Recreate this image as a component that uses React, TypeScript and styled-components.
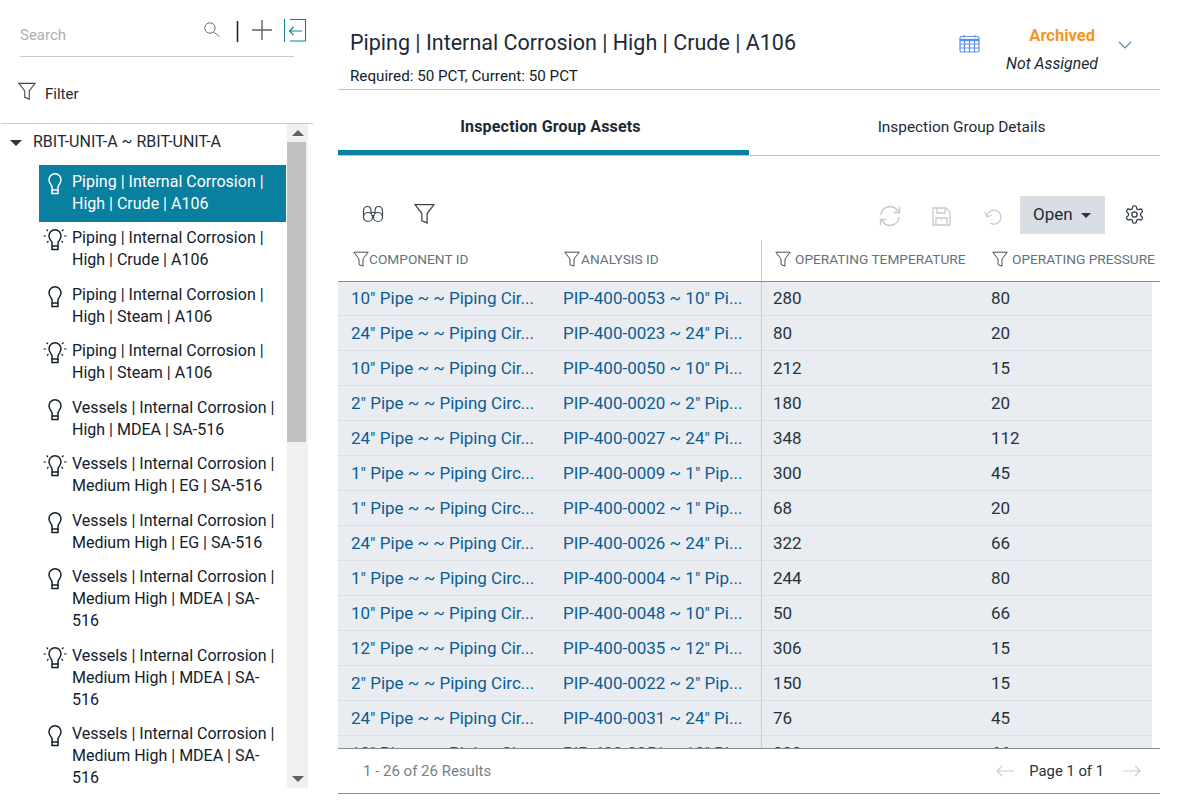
import React from "react";
import styled, { createGlobalStyle } from "styled-components";

const GlobalStyle = createGlobalStyle`
  html, body {
    margin: 0;
    padding: 0;
    background: #fff;
  }
  body {
    font-family: Roboto, "Noto Sans", sans-serif;
    color: #1c2a36;
  }
`;

const Page = styled.div`
  display: flex;
  width: 1184px;
  height: 800px;
  overflow: hidden;
`;

/* left panel */
const Side = styled.aside`
  width: 338px;
  flex: none;
  display: flex;
  flex-direction: column;
`;

const SearchRow = styled.div`
  display: flex;
  align-items: center;
  height: 56px;
  margin: 0 44px 0 20px;
  border-bottom: 1px solid #c6ccd2;
  box-sizing: content-box;
`;

const SearchText = styled.span`
  font-size: 15px;
  color: #a9afb5;
  flex: 1;
  padding-top: 14px;
`;

const SearchTools = styled.div`
  display: flex;
  align-items: center;
  margin-right: -13px;
  margin-top: 6px;
`;

const FilterRow = styled.div`
  display: flex;
  align-items: center;
  gap: 9px;
  height: 66px;
  margin-left: 18px;
  font-size: 15px;
  padding-top: 7px;
  box-sizing: border-box;
  svg {
    margin-bottom: 6px;
  }
`;

const TreeBox = styled.div`
  width: 312px;
  margin-left: 1px;
  height: 665px;
  border-top: 1px solid #c6ccd2;
  display: flex;
  overflow: hidden;
`;

const Tree = styled.div`
  width: 285px;
  flex: none;
  overflow: hidden;
`;

const TreeHead = styled.div`
  display: flex;
  align-items: center;
  height: 41px;
  padding: 0 0 6px 9px;
  box-sizing: border-box;
  font-size: 16px;
  gap: 11px;
`;

const Caret = styled.span`
  width: 0;
  height: 0;
  border-left: 6px solid transparent;
  border-right: 6px solid transparent;
  border-top: 6px solid #333;
  margin-top: 3px;
`;

const TreeList = styled.div`
  margin-left: 38px;
`;

const Item = styled.div<{ $active?: boolean }>`
  display: flex;
  box-sizing: border-box;
  padding: 5.5px 4px 7px 0;
  line-height: 22px;
  font-size: 16px;
  background: ${(p) => (p.$active ? "#09809f" : "transparent")};
  color: ${(p) => (p.$active ? "#fff" : "#13202b")};
`;

const ItemIcon = styled.span`
  width: 32px;
  margin-right: 1px;
  flex: none;
  display: flex;
  justify-content: center;
`;

const ScrollTrack = styled.div`
  width: 21px;
  margin-left: 1px;
  height: 664px;
  background: #f0f0f0;
  display: flex;
  flex-direction: column;
  align-items: center;
`;

const ScrollBtn = styled.div<{ $down?: boolean }>`
  height: 18px;
  width: 100%;
  display: flex;
  align-items: center;
  justify-content: center;
  &::before {
    content: "";
    border-left: 6px solid transparent;
    border-right: 6px solid transparent;
    ${(p) => (p.$down ? "border-top: 6px solid #606060;" : "border-bottom: 6px solid #606060;")}
  }
`;

const ScrollThumb = styled.div`
  width: 19px;
  margin-right: 2px;
  height: 300px;
  background: #c1c1c1;
`;

const ScrollGap = styled.div`
  flex: 1;
`;

/* main panel */
const Main = styled.main`
  width: 822px;
  flex: none;
  display: flex;
  flex-direction: column;
`;

const Header = styled.header`
  height: 89px;
  border-bottom: 1px solid #c4c4c4;
  display: flex;
  box-sizing: content-box;
`;

const TitleBlock = styled.div`
  flex: 1;
  padding: 27px 0 0 12px;
`;

const Title = styled.div`
  font-size: 21.5px;
  line-height: 32px;
  color: #1d2a35;
`;

const Sub = styled.div`
  font-size: 15.2px;
  line-height: 20px;
  margin-top: 7px;
  color: #13202b;
`;

const StatusBlock = styled.div`
  display: flex;
  align-items: flex-start;
`;

const CalIcon = styled.span`
  margin-top: 34px;
  margin-right: 26px;
`;

const StatusText = styled.div`
  text-align: right;
  padding-top: 25px;
  width: 92px;
  white-space: nowrap;
`;

const Archived = styled.div`
  font-size: 16.500px;
  font-weight: 700;
  line-height: 22px;
  color: #f7941d;
  padding-right: 3px;
`;

const NotAssigned = styled.div`
  font-size: 15.800px;
  font-style: italic;
  line-height: 22px;
  margin-top: 6px;
  padding-right: 1px;
`;

const Chevron = styled.span`
  margin: 34px 28px 0 20px;
`;

const Tabs = styled.div`
  display: flex;
  height: 65px;
  border-bottom: 1px solid #c4c4c4;
`;

const Tab = styled.div<{ $active?: boolean }>`
  width: 411px;
  display: flex;
  justify-content: center;
  padding: 26px 0 0 14px;
  box-sizing: border-box;
  font-size: ${(p) => (p.$active ? "16px" : "15.400px")};
  letter-spacing: ${(p) => (p.$active ? "0.180px" : "0")};
  line-height: 22px;
  font-weight: ${(p) => (p.$active ? 700 : 400)};
  border-bottom: 5px solid ${(p) => (p.$active ? "#09809f" : "transparent")};
  height: 65px;
`;

const Toolbar = styled.div`
  height: 84px;
  display: flex;
  align-items: flex-end;
  padding-bottom: 6px;
  box-sizing: border-box;
`;

const ToolLeft = styled.div`
  display: flex;
  align-items: center;
  gap: 30px;
  padding: 0 0 3px 24px;
  box-sizing: border-box;
  height: 38px;
  flex: 1;
`;

const ToolRight = styled.div`
  display: flex;
  align-items: center;
  height: 38px;
`;

const GhostIcon = styled.span<{ $w: number }>`
  width: ${(p) => p.$w}px;
  display: flex;
  justify-content: center;
  padding-top: 2px;
`;

const OpenBtn = styled.div`
  display: flex;
  align-items: center;
  gap: 8px;
  width: 85px;
  height: 38px;
  box-sizing: border-box;
  padding: 0 0 2px 13px;
  background: #d8dee4;
  font-size: 17px;
  &::after {
    content: "";
    border-left: 5px solid transparent;
    border-right: 5px solid transparent;
    border-top: 5px solid #333;
    margin-top: 2px;
  }
`;

const GearWrap = styled.span`
  margin: 0 15px 2px 19px;
  display: flex;
`;

const Grid = styled.div`
  height: 508px;
  overflow: hidden;
  border-bottom: 1px solid #7d8c96;
`;

const COLS = "213px 210px 1px 218px 172px";

const HeadRow = styled.div`
  display: grid;
  grid-template-columns: ${COLS} 8px;
  height: 42px;
  box-sizing: border-box;
  border-bottom: 1px solid #7d8c96;
`;

const HeadCell = styled.div<{ $gap: number; $pad: number }>`
  display: flex;
  align-items: center;
  padding: 0 0 4px ${(p) => p.$pad}px;
  gap: ${(p) => p.$gap}px;
  font-size: 13.700px;
  color: #64727e;
  white-space: nowrap;
  svg {
    flex: none;
  }
`;

const Divider = styled.div`
  background: #c6ced4;
`;

const Cell = styled.div<{ $link?: boolean; $pad: number }>`
  display: flex;
  align-items: center;
  padding-left: ${(p) => p.$pad}px;
  font-size: 17px;
  white-space: nowrap;
  overflow: hidden;
  color: ${(p) => (p.$link ? "#0b5c94" : "#26333e")};
`;

const Row = styled.div`
  display: grid;
  grid-template-columns: ${COLS};
  width: 814px;
  height: 35px;
  box-sizing: border-box;
  background: #e9edf1;
  border-bottom: 1px solid #d8dfe4;
  ${HeadRow} + & {
    height: 34px;
    ${Cell} {
      padding-bottom: 1px;
    }
  }
`;

const Footer = styled.div`
  height: 44px;
  display: flex;
  align-items: center;
  justify-content: space-between;
  padding: 0 19px 0 25px;
  border-bottom: 1px solid #7d8c96;
  font-size: 15px;
`;

const Results = styled.span`
  color: #747f88;
`;

const Pager = styled.div`
  display: flex;
  align-items: center;
  color: #26333e;
`;

const PageLabel = styled.span`
  margin: 0 19px 0 15px;
  font-size: 14.800px;
`;

const Funnel = ({ size = 16, stroke = "#3b4650" }: { size?: number; stroke?: string }) => (
  <svg width={size} height={size} viewBox="0 0 20 20" fill="none" stroke={stroke} strokeWidth="1.2">
    <path d="M1 1.500h18l-6.500 8.500v9l-5-2v-7z" strokeLinejoin="miter" />
  </svg>
);

const Bulb = ({ rays, color = "#13202b" }: { rays?: boolean; color?: string }) => (
  <svg width="26" height="26" viewBox="0 0 26 26" fill="none" stroke={color} strokeWidth="1.5">
    <path d="M10 19v-3.200c0-1.600-3-3-3-7a6 6 0 0 1 12 0c0 4-3 5.400-3 7V19z" strokeLinejoin="round" />
    <path d="M10 19v3.500h6V19" />
    {rays && (
      <path
        d="M1.500 9h2.500M22 9h2.500M4.500 2.500l1.500 1.500M21.500 2.500L20 4M5 15.500l1.500-1.500M21 15.500L19.500 14"
        strokeWidth="1.200"
      />
    )}
  </svg>
);

const Calendar = () => (
  <svg width="21" height="19" viewBox="0 0 21 19" fill="none" stroke="#5f8fe8" strokeWidth="1.2">
    <rect x="1" y="2.500" width="19" height="15.500" rx="1.500" />
    <path d="M1 6h19" strokeWidth="2.400" />
    <path d="M5 1v2.500M16 1v2.500M5.500 6v12M10.500 6v12M15.500 6v12M1 10h19M1 14h19" />
  </svg>
);

const rows = [
  ['10" Pipe ~ ~ Piping Cir...', 'PIP-400-0053 ~ 10" Pi...', "280", "80"],
  ['24" Pipe ~ ~ Piping Cir...', 'PIP-400-0023 ~ 24" Pi...', "80", "20"],
  ['10" Pipe ~ ~ Piping Cir...', 'PIP-400-0050 ~ 10" Pi...', "212", "15"],
  ['2" Pipe ~ ~ Piping Circ...', 'PIP-400-0020 ~ 2" Pip...', "180", "20"],
  ['24" Pipe ~ ~ Piping Cir...', 'PIP-400-0027 ~ 24" Pi...', "348", "112"],
  ['1" Pipe ~ ~ Piping Circ...', 'PIP-400-0009 ~ 1" Pip...', "300", "45"],
  ['1" Pipe ~ ~ Piping Circ...', 'PIP-400-0002 ~ 1" Pip...', "68", "20"],
  ['24" Pipe ~ ~ Piping Cir...', 'PIP-400-0026 ~ 24" Pi...', "322", "66"],
  ['1" Pipe ~ ~ Piping Circ...', 'PIP-400-0004 ~ 1" Pip...', "244", "80"],
  ['10" Pipe ~ ~ Piping Cir...', 'PIP-400-0048 ~ 10" Pi...', "50", "66"],
  ['12" Pipe ~ ~ Piping Cir...', 'PIP-400-0035 ~ 12" Pi...', "306", "15"],
  ['2" Pipe ~ ~ Piping Circ...', 'PIP-400-0022 ~ 2" Pip...', "150", "15"],
  ['24" Pipe ~ ~ Piping Cir...', 'PIP-400-0031 ~ 24" Pi...', "76", "45"],
  ['10" Pipe ~ ~ Piping Cir...', 'PIP-400-0051 ~ 10" Pi...', "300", "66"],
];

const items: { lines: string[]; rays?: boolean; active?: boolean }[] = [
  { lines: ["Piping | Internal Corrosion |", "High | Crude | A106"], active: true },
  { lines: ["Piping | Internal Corrosion |", "High | Crude | A106"], rays: true },
  { lines: ["Piping | Internal Corrosion |", "High | Steam | A106"] },
  { lines: ["Piping | Internal Corrosion |", "High | Steam | A106"], rays: true },
  { lines: ["Vessels | Internal Corrosion |", "High | MDEA | SA-516"] },
  { lines: ["Vessels | Internal Corrosion |", "Medium High | EG | SA-516"], rays: true },
  { lines: ["Vessels | Internal Corrosion |", "Medium High | EG | SA-516"] },
  { lines: ["Vessels | Internal Corrosion |", "Medium High | MDEA | SA-", "516"] },
  { lines: ["Vessels | Internal Corrosion |", "Medium High | MDEA | SA-", "516"], rays: true },
  { lines: ["Vessels | Internal Corrosion |", "Medium High | MDEA | SA-", "516"] },
];

export default function App() {
  return (
    <Page>
      <GlobalStyle />
      <Side>
        <SearchRow>
          <SearchText>Search</SearchText>
          <SearchTools>
            <svg width="104" height="26" viewBox="0 0 104 26" fill="none">
              <circle cx="7" cy="10" r="5.200" stroke="#6b747c" />
              <path d="M10.500 14l6 4.500" stroke="#6b747c" />
              <path d="M34.500 3v21" stroke="#1c2a36" strokeWidth="1.600" />
              <path d="M49 12h20M59 2v20" stroke="#5a646d" strokeWidth="1.400" />
              <path d="M81.500 1v23" stroke="#09809f" strokeWidth="1" />
              <path d="M87 1.500h15.500V23H87M99 13H86.500M90.500 9l-4 4 4 4" stroke="#09809f" strokeWidth="1.100" />
            </svg>
          </SearchTools>
        </SearchRow>
        <FilterRow>
          <Funnel size={18} />
          Filter
        </FilterRow>
        <TreeBox>
          <Tree>
            <TreeHead>
              <Caret />
              RBIT-UNIT-A ~ RBIT-UNIT-A
            </TreeHead>
            <TreeList>
              {items.map((it, i) => (
                <Item key={i} $active={it.active}>
                  <ItemIcon>
                    <Bulb rays={it.rays} color={it.active ? "#fff" : "#13202b"} />
                  </ItemIcon>
                  <div>
                    {it.lines.map((l) => (
                      <div key={l}>{l}</div>
                    ))}
                  </div>
                </Item>
              ))}
            </TreeList>
          </Tree>
          <ScrollTrack>
            <ScrollBtn />
            <ScrollThumb />
            <ScrollGap />
            <ScrollBtn $down />
          </ScrollTrack>
        </TreeBox>
      </Side>
      <Main>
        <Header>
          <TitleBlock>
            <Title>Piping | Internal Corrosion | High | Crude | A106</Title>
            <Sub>Required: 50 PCT, Current: 50 PCT</Sub>
          </TitleBlock>
          <StatusBlock>
            <CalIcon>
              <Calendar />
            </CalIcon>
            <StatusText>
              <Archived>Archived</Archived>
              <NotAssigned>Not Assigned</NotAssigned>
            </StatusText>
            <Chevron>
              <svg width="14" height="8" viewBox="0 0 14 8" fill="none" stroke="#4b86a8" strokeWidth="1.100">
                <path d="M1 1l6 6 6-6" />
              </svg>
            </Chevron>
          </StatusBlock>
        </Header>
        <Tabs>
          <Tab $active>Inspection Group Assets</Tab>
          <Tab>Inspection Group Details</Tab>
        </Tabs>
        <Toolbar>
          <ToolLeft>
            <svg width="22" height="18" viewBox="0 0 22 18" fill="none" stroke="#3b4650" strokeWidth="1.200">
              <circle cx="6" cy="12" r="4.500" />
              <circle cx="16" cy="12" r="4.500" />
              <path d="M1.500 11V6.500C1.500 3.500 3 1.500 5.500 1.500S9 3.500 9 6v3M20.500 11V6.500c0-3-1.500-5-4-5S13 3.500 13 6v3M9 7.500h4M9.500 10.500h3" />
            </svg>
            <Funnel size={21} />
          </ToolLeft>
          <ToolRight>
            <GhostIcon $w={52}>
              <svg width="22" height="22" viewBox="0 0 22 22" fill="none" stroke="#c5cace" strokeWidth="1.400">
                <path d="M2 10a9 9 0 0 1 16-5l2.500 2.500M20.500 1.500v6h-6M20 12a9 9 0 0 1-16 5l-2.500-2.500M1.500 20.500v-6h6" />
              </svg>
            </GhostIcon>
            <GhostIcon $w={50}>
              <svg width="19" height="19" viewBox="0 0 19 19" fill="none" stroke="#c5cace" strokeWidth="1.300">
                <path d="M1 1h13l4 4v13H1zM5 1v5h8V1M4 18v-7h11v7M9 13h1" />
              </svg>
            </GhostIcon>
            <GhostIcon $w={54}>
              <svg width="19" height="17" viewBox="0 0 19 17" fill="none" stroke="#c5cace" strokeWidth="1.300">
                <path d="M3 8a7 7 0 1 1 3 7M1 4l2 5 5-2" />
              </svg>
            </GhostIcon>
            <OpenBtn>Open</OpenBtn>
            <GearWrap>
              <svg width="21" height="21" viewBox="0 0 24 24" fill="none" stroke="#2b3640" strokeWidth="1.400" strokeLinejoin="round">
                <path d="M12.220 2h-.44a2 2 0 0 0-2 2v.18a2 2 0 0 1-1 1.730l-.43.25a2 2 0 0 1-2 0l-.15-.08a2 2 0 0 0-2.730.73l-.22.38a2 2 0 0 0 .73 2.730l.15.1a2 2 0 0 1 1 1.720v.51a2 2 0 0 1-1 1.740l-.15.09a2 2 0 0 0-.73 2.730l.22.38a2 2 0 0 0 2.730.73l.15-.08a2 2 0 0 1 2 0l.43.25a2 2 0 0 1 1 1.730V20a2 2 0 0 0 2 2h.44a2 2 0 0 0 2-2v-.18a2 2 0 0 1 1-1.730l.43-.25a2 2 0 0 1 2 0l.15.08a2 2 0 0 0 2.730-.73l.22-.39a2 2 0 0 0-.73-2.730l-.15-.08a2 2 0 0 1-1-1.740v-.5a2 2 0 0 1 1-1.740l.15-.09a2 2 0 0 0 .73-2.730l-.22-.38a2 2 0 0 0-2.730-.73l-.15.08a2 2 0 0 1-2 0l-.43-.25a2 2 0 0 1-1-1.730V4a2 2 0 0 0-2-2z" />
                <circle cx="12" cy="12" r="3" />
              </svg>
            </GearWrap>
          </ToolRight>
        </Toolbar>
        <Grid>
          <HeadRow>
            <HeadCell $pad={15} $gap={0}>
              <Funnel size={16} />
              COMPONENT ID
            </HeadCell>
            <HeadCell $pad={13} $gap={1}>
              <Funnel size={16} />
              ANALYSIS ID
            </HeadCell>
            <Divider />
            <HeadCell $pad={13} $gap={4}>
              <Funnel size={16} />
              OPERATING TEMPERATURE
            </HeadCell>
            <HeadCell $pad={12} $gap={4}>
              <Funnel size={16} />
              OPERATING PRESSURE
            </HeadCell>
          </HeadRow>
          {rows.map((r, i) => (
            <Row key={i}>
              <Cell $link $pad={13}>{r[0]}</Cell>
              <Cell $link $pad={12}>{r[1]}</Cell>
              <Divider />
              <Cell $pad={11}>{r[2]}</Cell>
              <Cell $pad={11}>{r[3]}</Cell>
            </Row>
          ))}
        </Grid>
        <Footer>
          <Results>1 - 26 of 26 Results</Results>
          <Pager>
            <svg width="18" height="12" viewBox="0 0 18 12" fill="none" stroke="#c5cace" strokeWidth="1.200">
              <path d="M18 6H1M6 1L1 6l5 5" />
            </svg>
            <PageLabel>Page 1 of 1</PageLabel>
            <svg width="18" height="12" viewBox="0 0 18 12" fill="none" stroke="#c5cace" strokeWidth="1.200">
              <path d="M0 6h17M12 1l5 5-5 5" />
            </svg>
          </Pager>
        </Footer>
      </Main>
    </Page>
  );
}
